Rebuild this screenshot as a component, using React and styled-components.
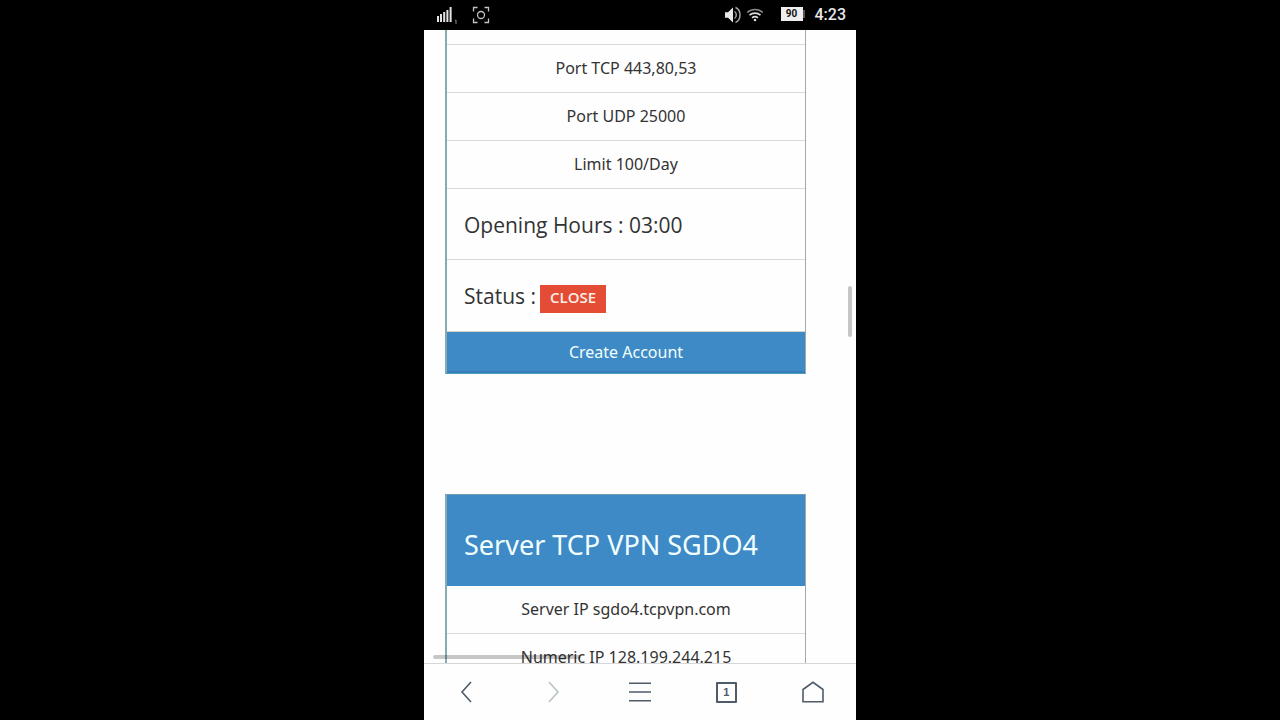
import React from "react";
import styled, { createGlobalStyle } from "styled-components";

const GlobalStyle = createGlobalStyle`
  * {
    box-sizing: border-box;
  }

  body {
    margin: 0;
    background: #000;
    color: #333;
    font-family: "Noto Sans", "Open Sans", sans-serif;
  }
`;

const Phone = styled.div`
  display: flex;
  flex-direction: column;
  height: 100vh;
  aspect-ratio: 3 / 5;
  max-width: 100%;
  margin: 0 auto;
  background: #fefefe;
`;

const StatusBar = styled.header`
  display: flex;
  justify-content: space-between;
  align-items: center;
  height: 30px;
  padding: 0 10px 0 12px;
  background: #000;
  color: #e8e8e8;
`;

const StatusGroup = styled.div`
  display: flex;
  align-items: center;
  gap: ${(props) => props.$gap};
`;

const Clock = styled.time`
  font-family: Roboto, sans-serif;
  font-size: 16px;
  font-weight: 500;
  line-height: 30px;
`;

const Battery = styled.span`
  display: flex;
  align-items: center;
  margin: 0 6px 2px 13px;

  &::after {
    content: "";
    width: 2px;
    height: 8px;
    background: #555;
  }
`;

const BatteryLevel = styled.span`
  width: 22px;
  background: #eee;
  color: #111;
  font-family: Roboto, sans-serif;
  font-size: 10px;
  font-weight: 700;
  line-height: 14px;
  text-align: center;
`;

const Viewport = styled.main`
  position: relative;
  flex: 1;
  min-height: 0;
  overflow: hidden;
`;

const Servers = styled.div`
  display: flex;
  flex-direction: column;
  gap: 120px;
  padding: 0 50px 0 21px;
`;

const Card = styled.section`
  border: 1px solid #a3a9ab;
  border-left: 2px solid #84acb2;
  border-top: ${(props) => (props.$cut ? "0" : "1px solid #6f9bb0")};
  border-bottom-color: #4a9cc4;
`;

const CardTitle = styled.h2`
  margin: 0;
  padding: 28px 17px 20px;
  background: #3e8ac6;
  color: #f2ffff;
  font-size: 27px;
  font-weight: 400;
  line-height: 43px;
`;

const Details = styled.ul`
  margin: 0;
  padding: 0;
  list-style: none;
`;

const Detail = styled.li`
  height: ${(props) => (props.$cut ? "15px" : "48px")};
  border-bottom: 1px solid #d8dbdb;
  font-size: 16px;
  line-height: 47px;
  text-align: center;
`;

const Info = styled.li`
  display: flex;
  align-items: flex-start;
  gap: 4px;
  height: 71px;
  padding: 21px 17px 0;
  border-bottom: 1px solid #d5d9d9;
  font-family: "Open Sans", sans-serif;
  font-size: 21px;
  line-height: 30px;

  &:last-child {
    height: 72px;
    border-color: #d8d3c8;
  }
`;

const Badge = styled.span`
  height: 28px;
  margin-top: 4px;
  padding: 0 10px;
  background: #e44c36;
  color: #fff0e8;
  font-size: 15px;
  font-weight: 600;
  line-height: 25px;
`;

const CreateButton = styled.button`
  display: block;
  width: 100%;
  height: 41px;
  padding: 0;
  border: 0;
  border-bottom: 2px solid #347db8;
  background: #3e8ac6;
  color: #f2ffff;
  font: inherit;
  font-size: 16px;
  line-height: 38px;
`;

const VerticalThumb = styled.div`
  position: absolute;
  top: 256px;
  right: 4px;
  width: 4px;
  height: 51px;
  border-radius: 2px;
  background: rgba(0, 0, 0, 0.22);
`;

const HorizontalThumb = styled.div`
  position: absolute;
  bottom: 4px;
  left: 9px;
  width: 148px;
  height: 4px;
  border-radius: 2px;
  background: rgba(0, 0, 0, 0.22);
`;

const NavBar = styled.nav`
  display: grid;
  grid-template-columns: repeat(5, 1fr);
  height: 57px;
  border-top: 1px solid #d6d6d6;
  background: #fefefe;
`;

const NavButton = styled.button`
  display: flex;
  align-items: center;
  justify-content: center;
  padding: 0;
  border: 0;
  background: none;
  color: ${(props) => (props.disabled ? "#b9c2c5" : "#4f5b69")};
`;

const TabCount = styled.span`
  width: 21px;
  height: 21px;
  border: 2px solid currentColor;
  border-radius: 1px;
  font-size: 11px;
  font-weight: 600;
  line-height: 17px;
  text-align: center;
`;

function SignalIcon() {
  return (
    <svg width="22" height="18" viewBox="0 0 22 18" fill="#e4e4e4">
      <rect x="1" y="10" width="2" height="6" />
      <rect x="4" y="8" width="2" height="8" />
      <rect x="7.2" y="6" width="2" height="10" />
      <rect x="10.4" y="4" width="2" height="12" />
      <rect x="13.6" y="1" width="2" height="15" />
      <path d="M19 14.6l1-.6v4" fill="none" stroke="#888" />
    </svg>
  );
}

function CaptureIcon() {
  return (
    <svg width="18" height="18" viewBox="0 0 18 18" fill="none" stroke="#c4c4c4" strokeWidth="1.3">
      <path d="M1.5 5.5v-4h4M12.5 1.5h4v4M16.5 12.5v4h-4M5.5 16.5h-4v-4" />
      <circle cx="9" cy="9" r="3.5" />
    </svg>
  );
}

function SpeakerIcon() {
  return (
    <svg width="18" height="18" viewBox="0 0 18 18" fill="none" stroke="#a8a8a8" strokeWidth="1.4">
      <path d="M1 6.3h3L9 1.5v15l-5-4.8H1z" fill="#e8e8e8" stroke="none" />
      <path d="M10.5 5.5c2.4 1.3 2.4 5.7 0 7M11.5 1.5c6 2.5 6 12.5 0 15" />
    </svg>
  );
}

function WifiIcon() {
  return (
    <svg width="18" height="14" viewBox="0 0 18 14" fill="none" strokeWidth="1.6">
      <path d="M1.2 4.5c4.4-4 11.2-4 15.6 0" stroke="#888" />
      <path d="M3.5 7.2c3.2-2.8 7.8-2.8 11 0" stroke="#ddd" />
      <path d="M6 9.8c1.8-1.5 4.2-1.5 6 0" stroke="#ddd" />
      <circle cx="9" cy="12" r="1.3" fill="#ddd" />
    </svg>
  );
}

function NavIcon({ d }) {
  return (
    <svg width="24" height="24" viewBox="0 0 24 24" fill="none" stroke="currentColor" strokeWidth="1.6">
      <path d={d} />
    </svg>
  );
}

export default function App() {
  return (
    <>
      <GlobalStyle />
      <Phone>
        <StatusBar>
          <StatusGroup $gap="14px">
            <SignalIcon />
            <CaptureIcon />
          </StatusGroup>
          <StatusGroup $gap="4px">
            <SpeakerIcon />
            <WifiIcon />
            <Battery>
              <BatteryLevel>90</BatteryLevel>
            </Battery>
            <Clock>4:23</Clock>
          </StatusGroup>
        </StatusBar>

        <Viewport>
          <Servers>
            <Card $cut>
              <Details>
                <Detail $cut />
                <Detail>Port TCP 443,80,53</Detail>
                <Detail>Port UDP 25000</Detail>
                <Detail>Limit 100/Day</Detail>
                <Info>Opening Hours : 03:00</Info>
                <Info>
                  Status : <Badge>CLOSE</Badge>
                </Info>
              </Details>
              <CreateButton type="button">Create Account</CreateButton>
            </Card>

            <Card>
              <CardTitle>Server TCP VPN SGDO4</CardTitle>
              <Details>
                <Detail>Server IP sgdo4.tcpvpn.com</Detail>
                <Detail>Numeric IP 128.199.244.215</Detail>
              </Details>
            </Card>
          </Servers>
          <VerticalThumb />
          <HorizontalThumb />
        </Viewport>

        <NavBar>
          <NavButton type="button" aria-label="Back">
            <NavIcon d="M16 2L7 12l9 10" />
          </NavButton>
          <NavButton type="button" aria-label="Forward" disabled>
            <NavIcon d="M7 2l9 10-9 10" />
          </NavButton>
          <NavButton type="button" aria-label="Menu">
            <NavIcon d="M1 3.2h22M1 12h22M1 20.8h22" />
          </NavButton>
          <NavButton type="button" aria-label="Tabs">
            <TabCount>1</TabCount>
          </NavButton>
          <NavButton type="button" aria-label="Home">
            <NavIcon d="M2 9.5L12 2.3l10 7.2v12.2H2z" />
          </NavButton>
        </NavBar>
      </Phone>
    </>
  );
}
